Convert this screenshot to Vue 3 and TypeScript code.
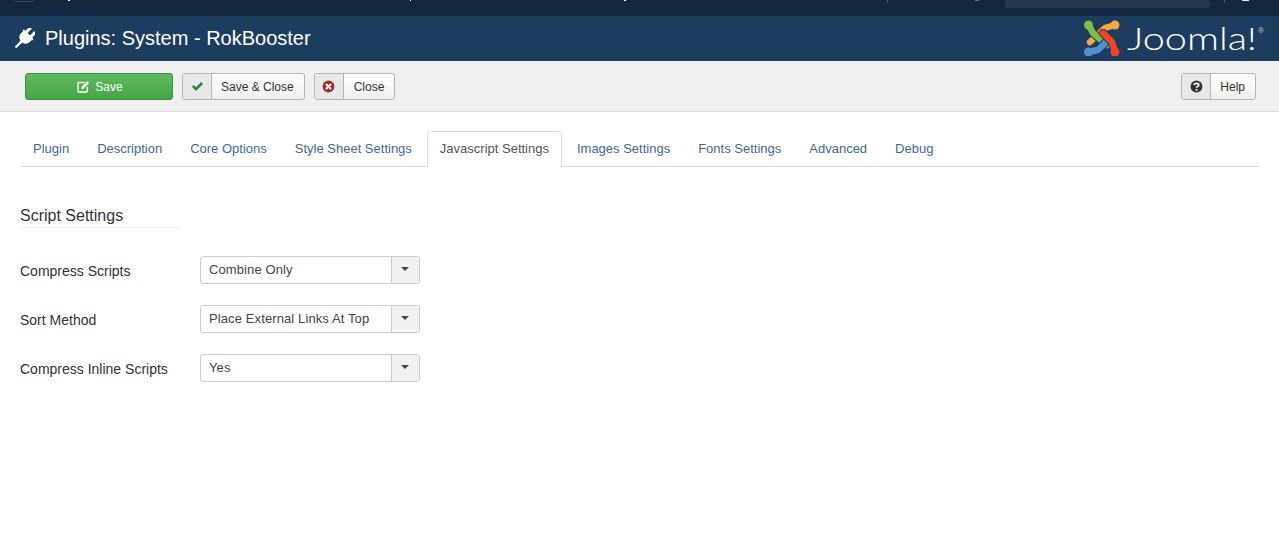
<script setup lang="ts">
const tabs: string[] = ['Plugin', 'Description', 'Core Options', 'Style Sheet Settings', 'Javascript Settings', 'Images Settings', 'Fonts Settings', 'Advanced', 'Debug']
const active = 'Javascript Settings'
const fields = [
  { label: 'Compress Scripts', value: 'Combine Only' },
  { label: 'Sort Method', value: 'Place External Links At Top' },
  { label: 'Compress Inline Scripts', value: 'Yes' },
]
const ticks = [
  { x: 68, w: 2, h: 1, c: '#fff' },
  { x: 410, w: 1, h: 1, c: '#fff' },
  { x: 624, w: 2, h: 1, c: '#fff' },
  { x: 887, w: 1, h: 3, c: '#4a5c6f' },
  { x: 975, w: 4, h: 1, c: '#5d6e7f' },
  { x: 1224, w: 1, h: 3, c: '#4a5c6f' },
  { x: 1242, w: 7, h: 1, c: '#e8ecf0' },
]
</script>

<template>
  <div class="page">
    <nav class="topnav">
      <span class="nav-box"></span>
      <span class="nav-search"></span>
      <i v-for="t in ticks" :key="t.x" class="tick" :style="{ left: t.x + 'px', width: t.w + 'px', height: t.h + 'px', background: t.c }"></i>
    </nav>
    <header class="head">
      <div class="title">
        <svg class="plug" viewBox="0 0 20 20" width="20" height="20">
          <g fill="#fff" transform="rotate(45 10 10)">
            <rect x="5.2" y="-1.8" width="3.2" height="8" rx="1.5" />
            <rect x="11.6" y="-1.8" width="3.2" height="8" rx="1.5" />
            <rect x="3" y="4.6" width="14" height="2.2" rx="1" />
            <path d="M3.8 6.5h12.4v2.6a6.2 6.2 0 0 1-5 6v1.5h-2.4v-1.5a6.2 6.2 0 0 1-5-6z" />
            <rect x="8.9" y="15" width="2.2" height="8.4" />
          </g>
        </svg>
        <h1>Plugins: System - RokBooster</h1>
      </div>
      <div class="brand">
        <svg class="mark" viewBox="0 0 36 36" width="36" height="36" fill="none" stroke-linecap="round" stroke-linejoin="round">
          <path d="M31 5 L21 8 L6 22" stroke="#f9a541" stroke-width="6.4" />
          <circle cx="31" cy="5" r="4.5" fill="#f9a541" />
          <path d="M4.5 5 L9 13 L23 25" stroke="#1c3d5f" stroke-width="8.6" />
          <path d="M4.5 5 L9 13 L23 25" stroke="#7ac143" stroke-width="6.4" />
          <circle cx="4.5" cy="5" r="4.5" fill="#7ac143" />
          <path d="M4.5 32 L14 30 L25 19" stroke="#1c3d5f" stroke-width="8.6" />
          <path d="M4.5 32 L14 30 L25 19" stroke="#5091cd" stroke-width="6.4" />
          <circle cx="4.5" cy="32" r="4.5" fill="#5091cd" />
          <path d="M31 32 L28 22 L19 13" stroke="#1c3d5f" stroke-width="8.6" />
          <path d="M31 32 L28 22 L19 13" stroke="#f44321" stroke-width="6.4" />
          <circle cx="31" cy="32" r="4.5" fill="#f44321" />
        </svg>
        <span class="word">Joomla!</span>
        <sup class="reg">®</sup>
      </div>
    </header>
    <div class="toolbar">
      <button class="btn save" type="button">
        <svg viewBox="0 0 14 14" width="13" height="13"><path fill="#fff" d="M2 2h7L7.6 3.4H2.6a.8.8 0 0 0-.8.8v7a.8.8 0 0 0 .8.8h7a.8.8 0 0 0 .8-.8V8l1.4-1.4V12a1.6 1.6 0 0 1-1.6 1.6H2A1.6 1.6 0 0 1 .4 12V3.6A1.6 1.6 0 0 1 2 2z M5 7.4 11 1.4 13 3.4 7 9.4 4.6 9.8z" /></svg>
        Save
      </button>
      <button class="btn split" type="button">
        <span class="ico">
          <svg viewBox="0 0 14 14" width="13" height="13"><path fill="#378137" d="M1 7.4 3 5.4 5.4 7.8 11 2.2 13 4.2 5.4 11.8z" /></svg>
        </span>
        <span class="lbl">Save &amp; Close</span>
      </button>
      <button class="btn split close" type="button">
        <span class="ico">
          <svg viewBox="0 0 14 14" width="13" height="13"><circle cx="7" cy="7" r="6.4" fill="#a8282d" /><path stroke="#fff" stroke-width="2.1" stroke-linecap="round" d="M4.8 4.8l4.4 4.4M9.2 4.8l-4.4 4.4" /></svg>
        </span>
        <span class="lbl">Close</span>
      </button>
      <button class="btn split help" type="button">
        <span class="ico">
          <svg viewBox="0 0 14 14" width="13" height="13"><circle cx="7" cy="7" r="6.4" fill="#333" /><path stroke="#f0f0f0" stroke-width="1.9" fill="none" d="M4.6 5.4C4.8 3.2 9.4 3.2 9.4 5.4 9.4 7 7 6.8 7 8.4" /><rect x="6" y="9.6" width="2" height="1.9" fill="#f0f0f0" /></svg>
        </span>
        <span class="lbl">Help</span>
      </button>
    </div>
    <main class="content">
      <ul class="tabs">
        <li v-for="t in tabs" :key="t" class="tab" :class="{ on: t === active }">{{ t }}</li>
      </ul>
      <h2 class="legend">Script Settings</h2>
      <div class="form">
        <div v-for="f in fields" :key="f.label" class="row">
          <label class="lab">{{ f.label }}</label>
          <div class="select">
            <span class="val">{{ f.value }}</span>
            <span class="arrow"><i class="caret"></i></span>
          </div>
        </div>
      </div>
    </main>
  </div>
</template>

<style scoped>
.page { width: 1279px; height: 546px; overflow: hidden; background: #fff; font-family: "Liberation Sans", Arial, sans-serif; font-size: 13px; color: #333; }
.topnav { position: relative; height: 16px; background: #11273e; display: flex; padding-left: 15px; box-sizing: border-box; }
.nav-box { width: 18px; height: 2px; background: #11273e; border: 1px solid #2c4866; border-top: 0; box-sizing: border-box; border-radius: 0 0 2px 2px; }
.nav-search { width: 205px; height: 8px; margin-left: auto; margin-right: 69px; background: #22374e; border-radius: 0 0 3px 3px; }
.tick { position: absolute; top: 0; }
.head { height: 45px; box-sizing: border-box; background: #1c3d5f; display: flex; align-items: center; justify-content: space-between; padding: 0 15px 1px 15px; }
.title { display: flex; align-items: center; gap: 10px; }
.plug { display: block; }
h1 { margin: 0; font-size: 20px; font-weight: 400; color: #fff; line-height: 24px; }
.brand { display: flex; align-items: center; }
.mark { display: block; margin-right: 7px; }
.word { display: block; width: 131px; font-family: Lato, sans-serif; font-weight: 300; font-size: 32px; color: #fff; line-height: 36px; white-space: nowrap; transform: scaleX(1.24); transform-origin: left center; }
.reg { font-size: 8px; color: #ccd; align-self: flex-start; margin: 7px 0 0 0; width: 6px; line-height: 8px; }
.toolbar { background: #f0f0f0; border-bottom: 1px solid #dcdcdc; display: flex; align-items: center; gap: 9px; padding: 1px 23px 0 25px; box-sizing: border-box; height: 51px; }
.btn { height: 27px; padding: 0; margin: 0; box-sizing: border-box; font-family: inherit; font-size: 12px; border-radius: 3px; display: flex; align-items: center; cursor: pointer; }
.save { width: 148px; justify-content: center; gap: 5px; color: #fff; background: linear-gradient(#5fbb5f, #46a546); border: 1px solid #3f8f3f; padding-left: 2px; }
.split { background: linear-gradient(#fff, #f0f0f0); border: 1px solid #b4b4b4; color: #333; overflow: hidden; }
.ico { width: 28px; height: 100%; background: #e8e8e8; border-right: 1px solid #b4b4b4; display: flex; align-items: center; justify-content: center; }
.lbl { padding: 0 10px 0 9px; }
.close .lbl { padding-left: 10px; }
.help { margin-left: auto; }
.content { padding: 19px 19px 0 20px; }
.tabs { list-style: none; margin: 0; padding: 0; display: flex; height: 36px; box-sizing: border-box; border-bottom: 1px solid #ddd; }
.tab { height: 35px; box-sizing: border-box; padding: 0 12px; margin-right: 2px; line-height: 33px; color: #3f6a99; border: 1px solid transparent; border-bottom: 0; }
.tab.on { height: 36px; color: #555; background: #fff; border-color: #ddd; border-radius: 4px 4px 0 0; }
.legend { margin: 39px 0 0; width: 160px; height: 22px; box-sizing: border-box; border-bottom: 1px solid #eee; font-size: 16px; font-weight: 400; color: #333; line-height: 19px; }
.form { margin-top: 28px; display: flex; flex-direction: column; gap: 21px; }
.row { display: flex; align-items: center; height: 28px; }
.lab { width: 180px; font-size: 14px; line-height: 18px; padding-top: 2px; }
.select { width: 220px; height: 28px; box-sizing: border-box; display: flex; border: 1px solid #ccc; border-radius: 3px; }
.val { flex: 1; padding: 0 8px; line-height: 25px; color: #444; letter-spacing: 0.11px; }
.arrow { width: 27px; background: #f1f1f1; border-left: 1px solid #ccc; display: flex; align-items: center; justify-content: center; }
.caret { width: 0; height: 0; border-left: 4px solid transparent; border-right: 4px solid transparent; border-top: 4px solid #444; margin: 0 1px 2px 0; }
</style>
